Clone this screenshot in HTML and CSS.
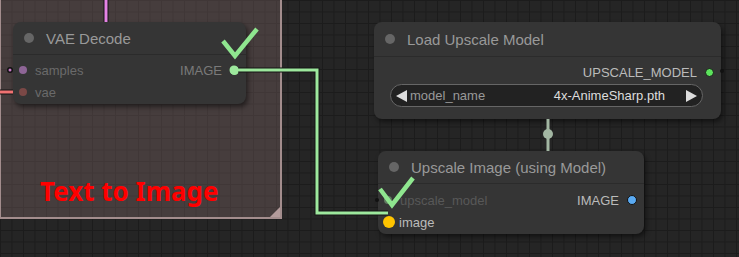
FILE: index.html
```html
<!DOCTYPE html>
<html lang="en">
<head>
    <meta charset="UTF-8">
    <title>Upscale workflow</title>
    <link rel="stylesheet" href="styles.css">
</head>
<body>
    <div class="canvas">
        <div class="group">
            <div class="group-text">Text to Image</div>
            <div class="group-corner"></div>
        </div>

        <div class="node node-vae">
            <div class="node-title"><span class="title-dot"></span>VAE Decode</div>
            <div class="node-body">
                <div class="slot-row">
                    <div class="slot slot-in dim"><span class="dot dot-latent"></span>samples</div>
                    <div class="slot slot-out dim-out">IMAGE<span class="dot dot-image-link"></span></div>
                </div>
                <div class="slot-row">
                    <div class="slot slot-in dim"><span class="dot dot-vae"></span>vae</div>
                </div>
            </div>
        </div>

        <div class="node node-loader">
            <div class="node-title title-tall"><span class="title-dot"></span>Load Upscale Model</div>
            <div class="node-body">
                <div class="slot-row row-end">
                    <div class="slot slot-out bright">UPSCALE_MODEL<span class="dot dot-model"></span></div>
                </div>
                <div class="combo">
                    <svg class="combo-arrow" width="11" height="12" viewBox="0 0 11 12"><polygon points="11,0 11,12 0,6" /></svg>
                    <span class="combo-label">model_name</span>
                    <span class="combo-value">4x-AnimeSharp.pth</span>
                    <svg class="combo-arrow" width="11" height="12" viewBox="0 0 11 12"><polygon points="0,0 0,12 11,6" /></svg>
                </div>
            </div>
        </div>

        <div class="node node-upscale">
            <div class="node-title"><span class="title-dot"></span>Upscale Image (using Model)</div>
            <div class="node-body">
                <div class="slot-row">
                    <div class="slot slot-in faint"><span class="dot dot-model-in"></span>upscale_model</div>
                    <div class="slot slot-out bright">IMAGE<span class="dot dot-image-out"></span></div>
                </div>
                <div class="slot-row">
                    <div class="slot slot-in bright image-in"><span class="dot dot-image-in"></span>image</div>
                </div>
            </div>
        </div>

        <svg class="links" width="739" height="257" viewBox="0 0 739 257">
            <!-- links -->
            <line x1="106" y1="-5" x2="106" y2="22" stroke="#151515" stroke-width="5" />
            <line x1="106" y1="-5" x2="106" y2="22" stroke="#e583e5" stroke-width="3" />
            <line x1="-5" y1="92" x2="13" y2="92" stroke="#151515" stroke-width="5" />
            <line x1="-5" y1="92" x2="13" y2="92" stroke="#f07272" stroke-width="3" />
            <polyline points="238,70 317,70 317,213 388,213" fill="none" stroke="#151515" stroke-width="5" />
            <polyline points="234,70 317,70 317,213 388,213" fill="none" stroke="#9de89d" stroke-width="3" />
            <circle cx="234" cy="70" r="4.5" fill="#9de89d" />
            <line x1="548" y1="119" x2="548" y2="151" stroke="#a2b6a2" stroke-width="3" />
            <circle cx="548" cy="134" r="5" fill="#a2b6a2" />
            <!-- loose ends -->
            <circle cx="10" cy="70" r="3" fill="#111" />
            <circle cx="10" cy="70" r="1.5" fill="#c87ac8" />
            <circle cx="722" cy="71" r="2" fill="#111" />
            <circle cx="377" cy="200" r="2" fill="#111" />
            <!-- checkmarks -->
            <polyline points="223,41 235,56 257,29" fill="none" stroke="#8fe68f" stroke-width="4.5" />
            <polyline points="380,189 392,205 413,178" fill="none" stroke="#8fe68f" stroke-width="4.5" />
        </svg>
    </div>
</body>
</html>
```

FILE: styles.css
```css
body {
    margin: 0;
    background-color: #222;
    font-family: "Liberation Sans", Arial, sans-serif;
}

.canvas {
    position: relative;
    width: 739px;
    height: 257px;
    overflow: hidden;
    background-color: #252525;
    background-image:
        linear-gradient(#1c1c1c 1px, transparent 1px),
        linear-gradient(90deg, #1c1c1c 1px, transparent 1px);
    background-size: 11.5px 11.5px;
}

.group {
    position: absolute;
    left: -1px;
    top: -20px;
    width: 283px;
    height: 239px;
    box-sizing: border-box;
    border: 2px solid #a38d8d;
    background-color: rgba(170, 136, 136, 0.25);
}

.group-text {
    position: absolute;
    left: 39px;
    top: 196px;
    font-family: "Noto Sans", sans-serif;
    font-weight: bold;
    font-size: 26px;
    line-height: 1;
    color: #ff0000;
}

.group-corner {
    position: absolute;
    right: 0;
    bottom: 0;
    width: 0;
    height: 0;
    border-left: 10px solid transparent;
    border-bottom: 10px solid #b39b9b;
}

.node {
    position: absolute;
    box-sizing: border-box;
    background-color: #353535;
    border-radius: 8px;
    box-shadow: 2px 3px 5px rgba(0, 0, 0, 0.5);
    font-size: 13px;
    color: #999;
}

.node-vae {
    left: 13px;
    top: 22px;
    width: 233px;
    height: 82px;
}

.node-loader {
    left: 374px;
    top: 22px;
    width: 347px;
    height: 97px;
}

.node-upscale {
    left: 378px;
    top: 151px;
    width: 266px;
    height: 83px;
}

.node-title {
    display: flex;
    align-items: center;
    gap: 12px;
    height: 32px;
    padding-left: 11px;
    border-bottom: 1px solid #2b2b2b;
    font-size: 15px;
    color: #999;
}

.title-tall {
    height: 34px;
}

.title-dot {
    width: 10px;
    height: 10px;
    border-radius: 50%;
    background-color: #666;
}

.node-body {
    padding-top: 4px;
}

.node-upscale .node-body {
    padding-top: 5px;
}

.slot-row {
    display: flex;
    justify-content: space-between;
    align-items: center;
    height: 22px;
}

.row-end {
    justify-content: flex-end;
}

.slot {
    display: flex;
    align-items: center;
    gap: 8px;
}

.slot-in {
    padding-left: 6px;
}

.slot-out {
    padding-right: 7px;
}

.dim {
    color: #6a6a6a;
}

.dim-out {
    color: #7a7a7a;
}

.faint {
    color: #585858;
}

.bright {
    color: #bbb;
}

.image-in {
    padding-left: 5px;
    gap: 4px;
}

.dot {
    width: 8px;
    height: 8px;
    border-radius: 50%;
    box-sizing: border-box;
}

.dot-latent {
    background-color: #8e6596;
}

.dot-vae {
    background-color: #7a4846;
}

.dot-image-link {
    width: 9px;
    height: 9px;
    background-color: #98e898;
}

.dot-model {
    width: 9px;
    height: 9px;
    background-color: #5ce35c;
    border: 1px solid #1a1a1a;
}

.dot-model-in {
    background-color: #5f7a5f;
}

.dot-image-out {
    width: 10px;
    height: 10px;
    background-color: #5aaaf2;
    border: 1px solid #111;
}

.dot-image-in {
    width: 12px;
    height: 12px;
    background-color: #ffc400;
}

.combo {
    display: flex;
    align-items: center;
    height: 23px;
    margin: 1px 18px 0 16px;
    padding: 0 5px;
    box-sizing: border-box;
    border: 1px solid #666;
    border-radius: 12px;
    background-color: #222;
}

.combo-arrow {
    fill: #ddd;
}

.combo-label {
    flex: 1;
    margin-left: 3px;
    color: #999;
}

.combo-value {
    margin-right: 21px;
    color: #ddd;
}

.links {
    position: absolute;
    left: 0;
    top: 0;
}
```
